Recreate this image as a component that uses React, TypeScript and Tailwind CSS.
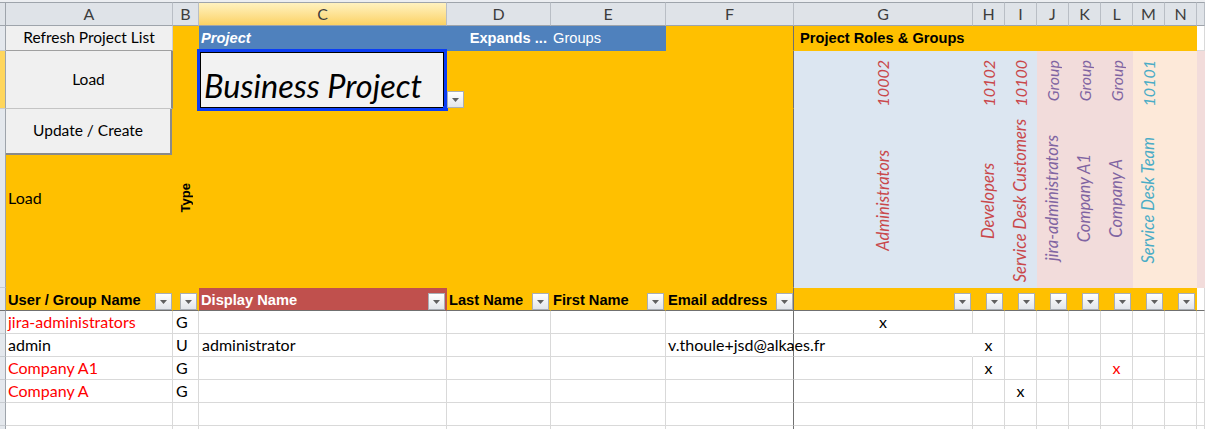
import React from "react";

const CAL = "font-['Lato',sans-serif]";
const ARB = "font-['Liberation_Sans',Arial,sans-serif]";

const GRID_COLS =
  "grid-cols-[6px_167px_26px_248px_104px_115px_128px_179px_32px_32px_32px_32px_32px_32px_32px_1fr]";
const GRID_ROWS =
  "grid-rows-[24px_25px_58px_179px_23px_23px_23px_23px_23px_23px_23px]";

const LETTERS = ["A", "B", "C", "D", "E", "F", "G", "H", "I", "J", "K", "L", "M", "N", ""];

const YELLOW = "bg-[#ffc000] border-r border-b border-transparent";
const WHITE = "bg-white border-r border-b border-[#d9d9d9]";
const FREEZE_R = "border-r-[#707070]";

function FilterButton() {
  return (
    <span className="flex h-[17px] w-[17px] shrink-0 items-center justify-center border border-[#a9aeb5] bg-linear-to-b from-white to-[#e2e5ea]">
      <svg width="9" height="6" viewBox="0 0 9 6" className="mt-[1px]">
        <path d="M1 1h7L4.5 5z" fill="#606060" />
      </svg>
    </span>
  );
}

function RowHead({ active = false, freeze = false }: { active?: boolean; freeze?: boolean }) {
  return (
    <div
      className={`border-r border-b border-r-[#9ea4ab] ${freeze ? "border-b-[#707070]" : "border-b-[#c8ccd1]"} ${
        active ? "bg-[#ffd65c]" : "bg-[#e4e8ed]"
      }`}
    />
  );
}

type Role = { id: string; name: string; color: string; bg: string };

const ROLES: Role[] = [
  { id: "10002", name: "Administrators", color: "text-[#c9484b]", bg: "bg-[#dce6f1]" },
  { id: "10102", name: "Developers", color: "text-[#c9484b]", bg: "bg-[#dce6f1]" },
  { id: "10100", name: "Service Desk Customers", color: "text-[#c9484b]", bg: "bg-[#dce6f1]" },
  { id: "Group", name: "jira-administrators", color: "text-[#8064a2]", bg: "bg-[#f2dcdb]" },
  { id: "Group", name: "Company A1", color: "text-[#8064a2]", bg: "bg-[#f2dcdb]" },
  { id: "Group", name: "Company A", color: "text-[#8064a2]", bg: "bg-[#f2dcdb]" },
  { id: "10101", name: "Service Desk Team", color: "text-[#4bacc6]", bg: "bg-[#fde9d9]" },
  { id: "", name: "", color: "", bg: "bg-[#fde9d9]" },
  { id: "", name: "", color: "", bg: "bg-[#f2dcdb]" },
];

function RoleCell({ role }: { role: Role }) {
  return (
    <div
      className={`row-span-2 flex flex-col items-center border-r border-b border-transparent pt-[9px] ${role.bg}`}
    >
      {role.id && (
        <span
          className={`rotate-180 text-[16px] leading-none italic [writing-mode:vertical-rl] ${CAL} ${role.color}`}
        >
          {role.id}
        </span>
      )}
      <div className="flex flex-1 items-center justify-center pt-[8px]">
        {role.name && (
          <span
            className={`rotate-180 whitespace-nowrap text-[16.5px] leading-none italic [writing-mode:vertical-rl] ${CAL} ${role.color}`}
          >
            {role.name}
          </span>
        )}
      </div>
    </div>
  );
}

type DataRow = {
  name: string;
  red: boolean;
  type: string;
  display?: string;
  email?: string;
  marks: Record<number, "black" | "red">;
};

// marks are keyed by role column index (0 = G ... 7 = N)
const DATA: DataRow[] = [
  { name: "jira-administrators", red: true, type: "G", marks: { 0: "black" } },
  {
    name: "admin",
    red: false,
    type: "U",
    display: "administrator",
    email: "v.thoule+jsd@alkaes.fr",
    marks: { 1: "black" },
  },
  { name: "Company A1", red: true, type: "G", marks: { 1: "black", 5: "red" } },
  { name: "Company A", red: true, type: "G", marks: { 2: "black" } },
  { name: "", red: false, type: "", marks: {} },
  { name: "", red: false, type: "", marks: {} },
];

function HeaderLabel({ text, white = false }: { text: string; white?: boolean }) {
  return (
    <span
      className={`truncate pb-[2px] text-[14.67px] font-bold leading-none ${ARB} ${
        white ? "text-white" : "text-black"
      }`}
    >
      {text}
    </span>
  );
}

export default function App() {
  return (
    <div className="h-[429px] w-[1205px] overflow-hidden bg-white">
      <div className="h-[2px] bg-[#eceef1]" />
      <div className={`grid ${GRID_COLS} ${GRID_ROWS}`}>
        {/* column letters */}
        <div className="border-t border-r border-b border-[#9ea4ab] bg-[#dfe3e8]" />
        {LETTERS.map((l, i) => (
          <div
            key={`h${i}`}
            className={`flex items-center justify-center border-t border-r border-b border-t-[#9ea4ab] border-r-[#b9bec5] border-b-[#9ea4ab] text-[16px] text-[#3d3d3d] ${CAL} ${
              l === "C" ? "bg-linear-to-b from-[#fff2bf] to-[#fbd262]" : "bg-[#dfe3e8]"
            }`}
          >
            {l}
          </div>
        ))}

        {/* row 1 */}
        <RowHead />
        <div
          className={`flex items-center justify-center border-r border-b border-r-[#d0d0d0] border-b-[#a0a0a0] bg-[#f0f0f0] text-[15.5px] text-black ${CAL}`}
        >
          Refresh Project List
        </div>
        <div className={YELLOW} />
        <div className="flex items-center border-r border-b border-transparent bg-[#4f81bd] pl-[2px]">
          <span className={`text-[14.67px] font-bold italic leading-none text-white ${ARB}`}>Project</span>
        </div>
        <div className="flex items-center justify-end border-r border-b border-transparent bg-[#4f81bd] pr-[3px]">
          <span className={`text-[14.67px] font-bold leading-none text-white ${ARB}`}>Expands ...</span>
        </div>
        <div className="flex items-center border-r border-b border-transparent bg-[#4f81bd] pl-[2px]">
          <span className={`text-[14.67px] leading-none text-white ${ARB}`}>Groups</span>
        </div>
        <div className={`${YELLOW} ${FREEZE_R}`} />
        <div className={`relative ${YELLOW}`}>
          <span
            className={`absolute top-1/2 left-[6px] -translate-y-1/2 whitespace-nowrap text-[14.67px] font-bold leading-none text-black ${ARB}`}
          >
            Project Roles &amp; Groups
          </span>
        </div>
        {Array.from({ length: 7 }).map((_, i) => (
          <div key={`y1${i}`} className={YELLOW} />
        ))}
        <div className={WHITE} />

        {/* row 2 */}
        <RowHead active />
        <div
          className={`flex items-center justify-center border-r-2 border-b border-r-[#8a8a8a] border-b-[#c4c4c4] bg-[#f0f0f0] text-[15.5px] text-black ${CAL}`}
        >
          Load
        </div>
        <div className={YELLOW} />
        <div className="relative z-10 flex items-end border-r border-b border-transparent bg-[#f2f2f2] pb-[6px] pl-[5px]">
          <span className={`text-[32.5px] italic leading-none text-black ${CAL}`}>Business Project</span>
          <div className="pointer-events-none absolute -top-[2px] -right-[1px] -bottom-[3px] -left-[2px] border-[3px] border-[#0b3df5] shadow-[inset_0_0_0_1px_#000]" />
          <div className="absolute -right-[2px] -bottom-[3px] h-[5px] w-[5px] bg-[#0b3df5]" />
          <div className="absolute top-[40px] left-[calc(100%+1px)]">
            <FilterButton />
          </div>
        </div>
        <div className={YELLOW} />
        <div className={YELLOW} />
        <div className={`${YELLOW} ${FREEZE_R}`} />
        {ROLES.map((r, i) => (
          <RoleCell key={`r${i}`} role={r} />
        ))}

        {/* row 3 */}
        <RowHead />
        <div className={`relative flex items-center pl-[2px] ${YELLOW}`}>
          <span className={`text-[16px] leading-none text-black ${CAL}`}>Load</span>
          <div
            className={`absolute top-0 right-0 left-0 flex h-[46px] items-center justify-center border-r-2 border-b-2 border-[#8a8a8a] bg-[#f0f0f0] text-[15.5px] text-black ${CAL}`}
          >
            Update / Create
          </div>
        </div>
        <div className={`flex items-center justify-center ${YELLOW}`}>
          <span
            className={`rotate-180 text-[13px] font-bold leading-none text-black [writing-mode:vertical-rl] ${ARB}`}
          >
            Type
          </span>
        </div>
        <div className={YELLOW} />
        <div className={YELLOW} />
        <div className={YELLOW} />
        <div className={`${YELLOW} ${FREEZE_R}`} />

        {/* row 4: table headers with filters */}
        <RowHead freeze />
        <div className="flex items-end justify-between border-r border-b border-r-transparent border-b-[#707070] bg-[#ffc000] pl-[2px]">
          <HeaderLabel text="User / Group Name" />
          <FilterButton />
        </div>
        <div className="flex items-end justify-end border-r border-b border-r-transparent border-b-[#707070] bg-[#ffc000] pr-[1px]">
          <FilterButton />
        </div>
        <div className="flex items-end justify-between border-r border-b border-r-transparent border-b-[#707070] bg-[#c0504d] pr-[1px] pl-[2px]">
          <HeaderLabel text="Display Name" white />
          <FilterButton />
        </div>
        <div className="flex items-end justify-between border-r border-b border-r-transparent border-b-[#707070] bg-[#ffc000] pr-[1px] pl-[2px]">
          <HeaderLabel text="Last Name" />
          <FilterButton />
        </div>
        <div className="flex items-end justify-between border-r border-b border-r-transparent border-b-[#707070] bg-[#ffc000] pr-[1px] pl-[2px]">
          <HeaderLabel text="First Name" />
          <FilterButton />
        </div>
        <div className="flex items-end justify-between border-r border-b border-[#707070] bg-[#ffc000] pl-[2px]">
          <HeaderLabel text="Email address" />
          <FilterButton />
        </div>
        {Array.from({ length: 8 }).map((_, i) => (
          <div
            key={`f${i}`}
            className="flex items-end justify-end border-r border-b border-r-transparent border-b-[#707070] bg-[#ffc000] pr-[1px]"
          >
            <FilterButton />
          </div>
        ))}
        <div className="border-r border-b border-r-[#d9d9d9] border-b-[#707070] bg-white" />

        {/* data rows */}
        {DATA.map((row, ri) => (
          <React.Fragment key={`d${ri}`}>
            <RowHead />
            <div className={`flex items-center pl-[2px] ${WHITE}`}>
              <span
                className={`whitespace-nowrap text-[16px] leading-none ${CAL} ${
                  row.red ? "text-[#ff0000]" : "text-black"
                }`}
              >
                {row.name}
              </span>
            </div>
            <div className={`flex items-center pl-[3px] ${WHITE}`}>
              <span className={`text-[16px] leading-none text-black ${CAL}`}>{row.type}</span>
            </div>
            <div className={`flex items-center pl-[3px] ${WHITE}`}>
              <span className={`text-[16px] leading-none text-black ${CAL}`}>{row.display ?? ""}</span>
            </div>
            <div className={WHITE} />
            <div className={WHITE} />
            <div className={`relative flex items-center pl-[2px] ${WHITE} ${FREEZE_R}`}>
              {row.email && (
                <span
                  className={`absolute top-1/2 left-[2px] -translate-y-1/2 whitespace-nowrap text-[16px] leading-none text-black ${CAL}`}
                >
                  {row.email}
                </span>
              )}
            </div>
            {Array.from({ length: 8 }).map((_, ci) => {
              const mark = row.marks[ci];
              return (
                <div
                  key={`m${ri}-${ci}`}
                  className={`flex items-center justify-center ${WHITE} ${
                    ri === 1 && ci === 0 ? "border-r-white" : ""
                  }`}
                >
                  {mark && (
                    <span
                      className={`text-[16px] leading-none ${CAL} ${
                        mark === "red" ? "text-[#ff0000]" : "text-black"
                      }`}
                    >
                      x
                    </span>
                  )}
                </div>
              );
            })}
            <div className={WHITE} />
          </React.Fragment>
        ))}
      </div>
    </div>
  );
}
